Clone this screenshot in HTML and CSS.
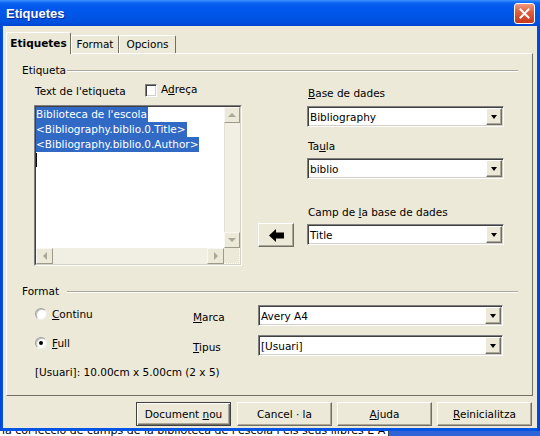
FILE: index.html
```html
<!DOCTYPE html>
<html>
<head>
<meta charset="utf-8">
<title>Etiquetes</title>
<link rel="stylesheet" href="styles.css">
</head>
<body>
<div class="screen">
  <div class="window">
    <div class="titlebar">
      <span class="title">Etiquetes</span>
      <span class="close">
        <svg width="11" height="11" viewBox="0 0 11 11"><path d="M1.5 1.5 L9.5 9.5 M9.5 1.5 L1.5 9.5" stroke="#fff" stroke-width="2" stroke-linecap="square"/></svg>
      </span>
    </div>
    <div class="client">
      <div class="tabs">
        <div class="tab active t1">Etiquetes</div>
        <div class="tab t2">Format</div>
        <div class="tab t3">Opcions</div>
      </div>
      <div class="panel">
        <div class="group-head"><span class="gl">Etiqueta</span><i class="rule"></i></div>
        <div class="etq">
          <div class="leftcol">
            <div class="textrow">
              <span class="tlabel">Text de l'etiqueta</span>
              <span class="check"></span>
              <span class="clabel">A<u>d</u>reça</span>
            </div>
            <div class="textbox">
              <div class="tb-inner">
                <div class="content">
                  <div class="line"><span class="sel">Biblioteca de l'escola</span></div>
                  <div class="line"><span class="sel">&lt;Bibliography.biblio.0.Title&gt;</span></div>
                  <div class="line"><span class="sel">&lt;Bibliography.biblio.0.Author&gt;</span></div>
                  <div class="line"><span class="caret"></span></div>
                </div>
                <div class="vscroll">
                  <span class="sbtn"><i class="tri up"></i></span>
                  <span class="track"></span>
                  <span class="sbtn"><i class="tri down"></i></span>
                </div>
                <div class="hscroll">
                  <span class="sbtn"><i class="tri left"></i></span>
                  <span class="track"></span>
                  <span class="sbtn"><i class="tri right"></i></span>
                </div>
                <div class="corner"></div>
              </div>
            </div>
          </div>
          <div class="arrowcol">
            <div class="arrowbtn">
              <svg width="15" height="13" viewBox="0 0 15 13"><polygon points="0,6.5 7,0 7,3.5 15,3.5 15,9.5 7,9.5 7,13" fill="#000"/></svg>
            </div>
          </div>
          <div class="rightcol">
            <div class="lbl l1"><u>B</u>ase de dades</div>
            <div class="select s1"><span class="val">Bibliography</span><span class="drop"><i class="dtri"></i></span></div>
            <div class="lbl l2">Ta<u>u</u>la</div>
            <div class="select s2"><span class="val">biblio</span><span class="drop"><i class="dtri"></i></span></div>
            <div class="lbl l3">Camp de <u>l</u>a base de dades</div>
            <div class="select s3"><span class="val">Title</span><span class="drop"><i class="dtri"></i></span></div>
          </div>
        </div>
        <div class="group-head fmt"><span class="gl">Format</span><i class="rule"></i></div>
        <div class="fmtbody">
          <div class="frow">
            <div class="rcell"><span class="radio"></span><span class="rlabel"><u>C</u>ontinu</span></div>
            <div class="flabel"><u>M</u>arca</div>
            <div class="select wide"><span class="val">Avery A4</span><span class="drop"><i class="dtri"></i></span></div>
          </div>
          <div class="frow r2">
            <div class="rcell"><span class="radio on"></span><span class="rlabel"><u>F</u>ull</span></div>
            <div class="flabel"><u>T</u>ipus</div>
            <div class="select wide"><span class="val">[Usuari]</span><span class="drop"><i class="dtri"></i></span></div>
          </div>
          <div class="info">[Usuari]: 10.00cm x 5.00cm (2 x 5)</div>
        </div>
      </div>
      <div class="buttons">
        <div class="btn default">Document <u>n</u>ou</div>
        <div class="btn">Cancel · la</div>
        <div class="btn"><u>A</u>juda</div>
        <div class="btn"><u>R</u>einicialitza</div>
      </div>
    </div>
  </div>
  <div class="under">
    <div class="under-left"><span class="utext">la col·lecció de camps de la biblioteca de l'escola i els seus llibres E A</span></div>
    <div class="under-right"></div>
  </div>
</div>
</body>
</html>
```

FILE: styles.css
```css
html, body {
  margin: 0;
  padding: 0;
}
body {
  width: 540px;
  height: 436px;
  overflow: hidden;
  font-family: "DejaVu Sans", "Bitstream Vera Sans", sans-serif;
  font-size: 10.5px;
  color: #000;
  background: #1F58D6;
}
u { text-decoration: underline; text-underline-offset: 1px; }

.screen {
  width: 540px;
  height: 436px;
  display: flex;
  flex-direction: column;
}
.window {
  height: 431px;
  flex: 0 0 431px;
  display: flex;
  flex-direction: column;
  background: linear-gradient(to right, #0842D0 0, #0055E5 3px, #0055E5 536px, #0040C8 540px);
}
.titlebar {
  height: 26px;
  flex: 0 0 26px;
  display: flex;
  align-items: center;
  justify-content: space-between;
  background: linear-gradient(to bottom, #3D95FF 0, #0A62F0 3px, #0058EE 8px, #0055E5 16px, #0052E0 22px, #0046D2 26px);
}
.title {
  margin-left: 6px;
  font-family: "Liberation Sans", Arial, sans-serif;
  font-weight: bold;
  font-size: 13px;
  color: #fff;
  text-shadow: 1px 1px 0 #0A2A8C;
}
.close {
  width: 21px;
  height: 21px;
  box-sizing: border-box;
  margin-right: 5px;
  border: 1px solid #fff;
  border-radius: 3px;
  background: linear-gradient(to bottom, #EE9A80 0, #E0603F 40%, #D2482A 75%, #C5391D 100%);
  display: flex;
  align-items: center;
  justify-content: center;
}
.client {
  flex: 1;
  margin: 0 3px 3px 3px;
  background: #ECE9D8;
  padding: 6px 4px 0 3px;
  display: flex;
  flex-direction: column;
}

/* tabs */
.tabs {
  display: flex;
  align-items: flex-end;
  height: 21px;
  flex: 0 0 21px;
}
.tab {
  height: 18px;
  box-sizing: border-box;
  border-top: 1px solid #fff;
  border-left: 1px solid #fff;
  border-right: 1px solid #716F64;
  border-radius: 2px 2px 0 0;
  line-height: 17px;
  text-align: center;
  background: #ECE9D8;
}
.tab.active {
  height: 22px;
  margin-bottom: -1px;
  font-weight: bold;
  line-height: 20px;
  position: relative;
  z-index: 1;
}
.t1 { width: 65px; }
.t2 { width: 48px; }
.t3 { width: 57px; }

.panel {
  height: 343px;
  flex: 0 0 343px;
  box-sizing: border-box;
  border: 1px solid;
  border-color: #fff #716F64 #716F64 #fff;
  padding: 10px 14px 0 15px;
}
.group-head {
  display: flex;
  align-items: center;
  height: 13px;
  line-height: 13px;
}
.gl { flex: 0 0 45px; }
.rule {
  flex: 1;
  height: 0;
  border-top: 1px solid #ACA899;
  border-bottom: 1px solid #fff;
}
.group-head.fmt { margin-top: 19px; }

.etq {
  display: flex;
  margin-top: 6px;
  margin-left: 12px;
}
.leftcol { width: 208px; }
.textrow {
  display: flex;
  align-items: center;
  height: 14px;
}
.tlabel {
  width: 111px;
  padding-left: 1px;
  box-sizing: border-box;
  margin-top: 2px;
}
.check {
  width: 12px;
  height: 13px;
  box-sizing: border-box;
  background: #fff;
  border: 1px solid;
  border-color: #808080 #fff #fff #808080;
  box-shadow: inset 1px 1px #404040, inset -1px -1px #D4D0C8;
}
.clabel { margin-left: 4px; margin-top: -2px; }

.textbox {
  margin-top: 8px;
  width: 208px;
  height: 161px;
  box-sizing: border-box;
  border: 1px solid;
  border-color: #808080 #fff #fff #808080;
}
.tb-inner {
  height: 100%;
  box-sizing: border-box;
  border: 1px solid;
  border-color: #404040 #D4D0C8 #D4D0C8 #404040;
  display: grid;
  grid-template-columns: 1fr 16px;
  grid-template-rows: 1fr 16px;
  background: #fff;
}
.content {
  overflow: hidden;
}
.line {
  height: 15px;
  line-height: 15px;
  white-space: nowrap;
}
.sel {
  display: inline-block;
  background: #316AC5;
  color: #fff;
  padding-right: 1px;
}
.caret {
  display: inline-block;
  width: 1px;
  height: 14px;
  background: #000;
  vertical-align: top;
  margin-top: 1px;
}
.vscroll {
  display: flex;
  flex-direction: column;
  background: #F1EFE4;
}
.hscroll {
  display: flex;
  background: #F1EFE4;
}
.track { flex: 1; }
.vscroll .track {
  border-left: 1px solid #E2DFD2;
}
.sbtn {
  width: 16px;
  height: 16px;
  box-sizing: border-box;
  background: #ECE9D8;
  border: 1px solid;
  border-color: #F8F7F2 #9D9A8C #9D9A8C #F8F7F2;
  display: flex;
  align-items: center;
  justify-content: center;
}
.hscroll .sbtn { width: 17px; }
.corner {
  background: #ECE9D8;
  border-right: 1px dotted #fff;
  border-bottom: 1px dotted #fff;
}
.tri {
  width: 0;
  height: 0;
  border-style: solid;
  border-color: transparent;
}
.tri.up { border-width: 0 4px 4px 4px; border-bottom-color: #ACA899; }
.tri.down { border-width: 4px 4px 0 4px; border-top-color: #ACA899; }
.tri.left { border-width: 4px 4px 4px 0; border-right-color: #ACA899; }
.tri.right { border-width: 4px 0 4px 4px; border-left-color: #ACA899; }

.arrowcol {
  margin-left: 16px;
  padding-top: 140px;
}
.arrowbtn {
  width: 36px;
  height: 24px;
  box-sizing: border-box;
  background: #ECE9D8;
  border: 1px solid;
  border-color: #fff #716F64 #716F64 #fff;
  box-shadow: inset -1px -1px #ACA899;
  display: flex;
  align-items: center;
  justify-content: center;
}
.rightcol {
  margin-left: 13px;
  width: 197px;
}
.lbl {
  line-height: 14px;
  height: 14px;
  padding-left: 1px;
}
.l1 { margin-top: 3px; }
.l2 { margin-top: 12px; }
.l3 { margin-top: 26px; }
.select {
  height: 21px;
  box-sizing: border-box;
  background: #fff;
  border: 1px solid;
  border-color: #808080 #fff #fff #808080;
  box-shadow: inset 1px 1px #404040, inset -1px -1px #D4D0C8;
  padding: 1px;
  display: flex;
  align-items: center;
  margin-top: 6px;
}
.s2, .s3 { margin-top: 5px; }
.val {
  flex: 1;
  padding-left: 1px;
  white-space: nowrap;
  overflow: hidden;
}
.drop {
  width: 16px;
  height: 17px;
  box-sizing: border-box;
  background: #ECE9D8;
  border: 1px solid;
  border-color: #fff #716F64 #716F64 #fff;
  box-shadow: inset -1px -1px #ACA899;
  display: flex;
  align-items: center;
  justify-content: center;
}
.dtri {
  width: 0;
  height: 0;
  border-style: solid;
  border-width: 4px 3.5px 0 3.5px;
  border-color: #000 transparent transparent transparent;
}

/* format */
.fmtbody {
  margin-top: 7px;
  margin-left: 13px;
}
.frow {
  display: flex;
  align-items: center;
  height: 21px;
}
.frow.r2 { margin-top: 9px; }
.rcell {
  width: 158px;
  display: flex;
  align-items: center;
  align-self: flex-start;
  height: 14px;
  padding-top: 2px;
}
.frow.r2 .rcell { padding-top: 1px; }
.radio {
  width: 12px;
  height: 12px;
  box-sizing: border-box;
  border-radius: 50%;
  background: #fff;
  border: 1px solid;
  border-color: #A0A0A0 #F0F0F0 #F0F0F0 #A0A0A0;
  box-shadow: inset 1px 1px #C0C0C0;
  display: flex;
  align-items: center;
  justify-content: center;
}
.radio.on::after {
  content: "";
  width: 4px;
  height: 4px;
  border-radius: 50%;
  background: #000;
}
.rlabel { margin-left: 5px; }
.flabel {
  width: 65px;
  margin-top: 2px;
}
.select.wide {
  width: 245px;
  margin-top: 0;
}
.info {
  margin-top: 9px;
  line-height: 14px;
}

/* buttons */
.buttons {
  display: flex;
  justify-content: flex-end;
  gap: 5px;
  margin-top: 6px;
  margin-right: 1px;
}
.btn {
  width: 95px;
  height: 24px;
  box-sizing: border-box;
  background: #ECE9D8;
  border: 1px solid;
  border-color: #fff #716F64 #716F64 #fff;
  box-shadow: inset -1px -1px #ACA899;
  text-align: center;
  line-height: 22px;
}
.btn.default {
  border: 1px solid #404040;
  box-shadow: inset 1px 1px #fff, inset -1px -1px #716F64, inset -2px -2px #ACA899;
  margin-right: 1px;
}

/* underlying window */
.under {
  height: 5px;
  flex: 0 0 5px;
  display: flex;
  overflow: hidden;
}
.under-left {
  width: 388px;
  background: #fff;
  border-right: 1px solid #4A4A4A;
  overflow: hidden;
  white-space: nowrap;
}
.utext {
  display: block;
  font-size: 11px;
  line-height: 11px;
  margin-top: -6px;
  padding-left: 2px;
}
.under-right {
  flex: 1;
  background: #2F64D8;
}
```
